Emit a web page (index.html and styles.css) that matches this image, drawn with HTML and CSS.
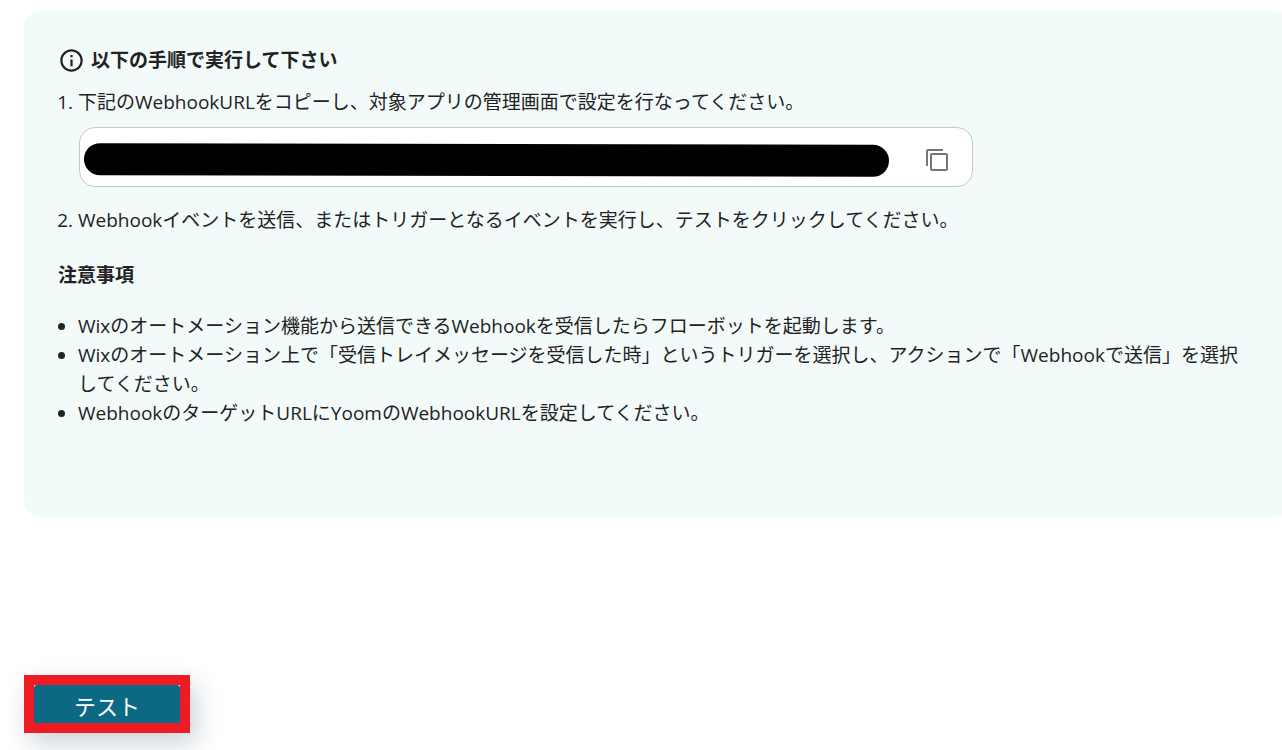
FILE: index.html
```
<!DOCTYPE html>
<html lang="ja">
<head>
    <meta charset="UTF-8">
    <meta name="viewport" content="width=device-width, initial-scale=1.0">
    <title>Webhook</title>
    <link rel="stylesheet" href="styles.css">
</head>
<body>
    <main class="page">
        <section class="panel">
            <h2 class="panel-title">
                <svg class="info-icon" viewBox="0 0 24 24" aria-hidden="true">
                    <path d="M11 7h2v2h-2zm0 4h2v6h-2zm1-9C6.48 2 2 6.48 2 12s4.48 10 10 10 10-4.48 10-10S17.52 2 12 2zm0 18c-4.41 0-8-3.59-8-8s3.59-8 8-8 8 3.59 8 8-3.59 8-8 8z"/>
                </svg>
                以下の手順で実行して下さい
            </h2>

            <ol class="steps">
                <li>
                    <label for="webhook-url">下記のWebhookURLをコピーし、対象アプリの管理画面で設定を行なってください。</label>
                    <div class="url-box">
                        <div class="url-field">
                            <input type="text" id="webhook-url" readonly>
                            <span class="mask"></span>
                        </div>
                        <button type="button" class="copy-btn" aria-label="コピー">
                            <svg viewBox="0 0 24 24" aria-hidden="true">
                                <path d="M2 18V3Q2 2 3 2H18"/>
                                <rect x="6" y="6" width="16" height="16" rx="1"/>
                            </svg>
                        </button>
                    </div>
                </li>
                <li>Webhookイベントを送信、またはトリガーとなるイベントを実行し、テストをクリックしてください。</li>
            </ol>

            <h3 class="notes-title">注意事項</h3>
            <ul class="notes">
                <li>Wixのオートメーション機能から送信できるWebhookを受信したらフローボットを起動します。</li>
                <li>Wixのオートメーション上で「受信トレイメッセージを受信した時」というトリガーを選択し、アクションで「Webhookで送信」を選択してください。</li>
                <li>WebhookのターゲットURLにYoomのWebhookURLを設定してください。</li>
            </ul>
        </section>

        <div class="highlight">
            <button type="button" class="test-btn">テスト</button>
        </div>
    </main>
</body>
</html>
```

FILE: styles.css
```
* {
    box-sizing: border-box;
}

body {
    margin: 0;
    background-color: #ffffff;
    color: #222222;
    font-family: "Open Sans", "Noto Sans CJK JP", sans-serif;
    font-size: 19px;
    line-height: 29px;
    overflow-x: hidden;
}

.page {
    padding: 11px 0 17px 24px;
}

/* Panel */
.panel {
    margin-right: -8px;
    padding: 35px 36px 89px 34px;
    background-color: #f2fbfa;
    border-radius: 16px;
}

.panel-title {
    display: flex;
    align-items: center;
    gap: 6px;
    margin: 0 0 13px;
    font-size: 19px;
    font-weight: bold;
}

.info-icon {
    width: 27px;
    height: 27px;
    fill: #222222;
}

.steps,
.notes {
    margin: 0;
    padding-left: 20px;
}

/* URL */
.url-box {
    display: flex;
    align-items: center;
    max-width: 894px;
    height: 60px;
    margin: 10px 0 19px 1px;
    padding: 6px 19px 0 4px;
    background-color: #ffffff;
    border: 1px solid #c8c8c8;
    border-radius: 16px;
}

.url-field {
    position: relative;
    flex: 1;
    margin-right: 32px;
}

.url-field input {
    display: block;
    width: 100%;
    height: 32px;
    padding: 0 12px;
    border: none;
    background: none;
    font: inherit;
}

.mask {
    position: absolute;
    inset: 0;
    background-color: #000000;
    border-radius: 16px;
    transform: rotate(0.12deg);
}

.copy-btn {
    width: 32px;
    height: 32px;
    padding: 4px;
    border: none;
    background: none;
    cursor: pointer;
}

.copy-btn svg {
    display: block;
    width: 24px;
    height: 24px;
    fill: none;
    stroke: #757575;
    stroke-width: 2;
}

.notes-title {
    margin: 26px 0 22px;
    font-size: 19px;
    font-weight: bold;
}

/* Test */
.highlight {
    width: 166px;
    margin-top: 158px;
    border: 10px solid #ed1c24;
    box-shadow: 6px 10px 26px rgba(20, 50, 75, 0.22);
}

.test-btn {
    display: block;
    width: 100%;
    height: 38px;
    padding: 4px 0 0;
    border: none;
    border-radius: 3px 3px 0 0;
    background-color: #0b6983;
    color: #ffffff;
    font-family: inherit;
    font-size: 22px;
    line-height: 34px;
    cursor: pointer;
}
```
